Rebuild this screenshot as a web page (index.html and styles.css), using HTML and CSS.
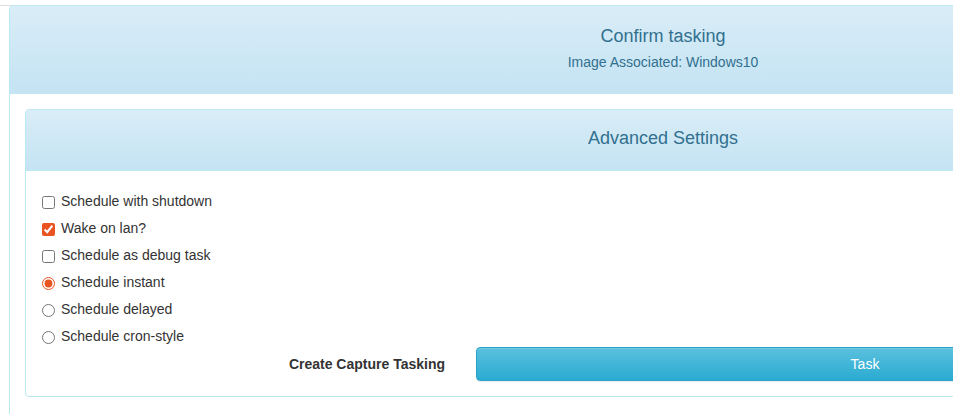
FILE: index.html
```html
<!DOCTYPE html>
<html>
<head>
<meta charset="utf-8">
<link rel="stylesheet" href="styles.css">
</head>
<body>
<div class="page">
  <div class="panel outer">
    <div class="panel-heading outer-heading">
      <h3 class="title">Confirm tasking</h3>
      <div class="subtitle">Image Associated: Windows10</div>
    </div>
    <div class="panel-body outer-body">
      <div class="panel inner">
        <div class="panel-heading inner-heading">
          <h3 class="title">Advanced Settings</h3>
        </div>
        <div class="panel-body inner-body">
          <label class="opt"><input type="checkbox"> Schedule with shutdown</label>
          <label class="opt"><input type="checkbox" checked> Wake on lan?</label>
          <label class="opt"><input type="checkbox"> Schedule as debug task</label>
          <label class="opt"><input type="radio" name="sched" checked> Schedule instant</label>
          <label class="opt"><input type="radio" name="sched"> Schedule delayed</label>
          <label class="opt"><input type="radio" name="sched"> Schedule cron-style</label>
          <div class="action-row">
            <div class="action-label">Create Capture Tasking</div>
            <button class="btn-task">Task</button>
          </div>
        </div>
      </div>
    </div>
  </div>
</div>
</body>
</html>
```
FILE: styles.css
```css
html, body {
  margin: 0;
  padding: 0;
  background: #fff;
  overflow: hidden;
  width: 953px;
  height: 414px;
}
body {
  font-family: "Liberation Sans", Arial, sans-serif;
  font-size: 14px;
  color: #333;
  padding-top: 5px;
}
.page {
  border-top: 1px solid #ddd;
  padding-left: 9px;
}
.panel {
  border: 1px solid #bce8f1;
  border-radius: 4px;
  background: #fff;
}
.outer {
  width: 1306px;
  margin-top: -1px;
  height: 600px;
}
.panel-heading {
  background: linear-gradient(to bottom, #d9edf7 0%, #c4e3f3 100%);
  color: #31708f;
  text-align: center;
  border-radius: 3px 3px 0 0;
}
.outer-heading {
  height: 88px;
  box-sizing: border-box;
  padding-top: 17px;
}
.title {
  margin: 0;
  font-size: 18px;
  font-weight: normal;
  line-height: 26px;
}
.subtitle {
  font-size: 14px;
  line-height: 20px;
  margin-top: 3px;
}
.outer-body {
  padding: 15px;
}
.inner {
  width: 1274px;
}
.inner-heading {
  height: 61px;
  box-sizing: border-box;
  padding-top: 15px;
  border-bottom: 1px solid #bce8f1;
}
.inner-body {
  padding: 20px 15px 15px 15px;
  display: flex;
  flex-direction: column;
}
.opt {
  display: flex;
  align-items: center;
  height: 20px;
  margin-bottom: 7px;
  line-height: 20px;
}
.opt input {
  margin: 2px 6px 0 1px;
  width: 13px;
  height: 13px;
  accent-color: #e95420;
}
.action-row {
  display: flex;
  align-items: center;
  margin-top: -6px;
}
.action-label {
  width: 404px;
  text-align: right;
  font-weight: bold;
  margin-right: 31px;
}
.btn-task {
  width: 778px;
  height: 34px;
  border: 1px solid #28a4c9;
  border-radius: 4px;
  background: linear-gradient(to bottom, #5bc0de 0%, #2aabd2 100%);
  color: #fff;
  font-family: "Liberation Sans", Arial, sans-serif;
  font-size: 14px;
  padding: 0;
  box-shadow: inset 0 1px 0 rgba(255,255,255,.15), 0 1px 1px rgba(0,0,0,.075);
}
```
